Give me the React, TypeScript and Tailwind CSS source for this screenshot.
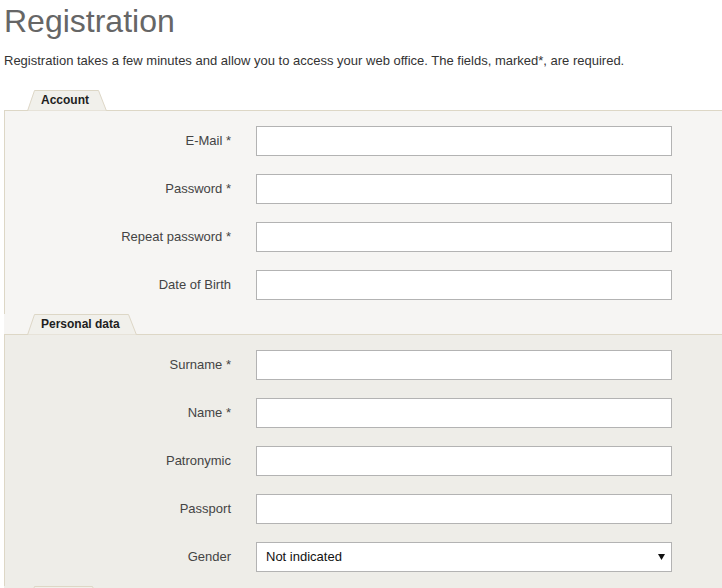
import { ReactNode } from "react";

type Field = { label: string; select?: string };

const account: Field[] = [
  { label: "E-Mail *" },
  { label: "Password *" },
  { label: "Repeat password *" },
  { label: "Date of Birth" },
];

const personal: Field[] = [
  { label: "Surname *" },
  { label: "Name *" },
  { label: "Patronymic" },
  { label: "Passport" },
  { label: "Gender", select: "Not indicated" },
];

function Tab({ title, width }: { title: string; width: number }) {
  // trapezoid tab that sits on top of the section border
  return (
    <div className="relative z-10 ml-[23px] h-[21px]" style={{ width }}>
      <svg className="absolute inset-0" width={width} height={21}>
        <polygon
          points={`0.5,21 7.5,0.5 ${width - 8.5},0.5 ${width - 0.5},21`}
          className="fill-[#f1f0eb] stroke-[#ddd7c6]"
        />
      </svg>
      <span className="relative block pl-[14px] text-[12px] font-bold leading-[20px] text-[#1e1e1e]">{title}</span>
    </div>
  );
}

function Section({ title, tabWidth, bg, children }: { title: string; tabWidth: number; bg: string; children: ReactNode }) {
  return (
    <div>
      <Tab title={title} width={tabWidth} />
      <div className={`-mt-px flex flex-col gap-[18px] border-l border-t border-[#ddd7c6] pb-[14px] pt-[15px] ${bg}`}>
        {children}
      </div>
    </div>
  );
}

function Row({ field }: { field: Field }) {
  return (
    <div className="flex items-center">
      <label className="w-[226px] text-right text-[13px] text-[#444]">{field.label}</label>
      {field.select ? (
        <div className="ml-[25px] flex h-[30px] w-[416px] items-center justify-between border border-[#b3b3b3] bg-white pl-[9px] pr-[6px] text-[13px] text-[#111]">
          <span>{field.select}</span>
          <svg width="7" height="6" viewBox="0 0 7 6">
            <path d="M0 0h7L3.5 6z" fill="#111" />
          </svg>
        </div>
      ) : (
        <input className="ml-[25px] h-[30px] w-[416px] border border-[#b3b3b3] bg-white outline-none" />
      )}
    </div>
  );
}

export default function App() {
  return (
    <div className="h-[588px] overflow-hidden bg-white pl-[4px] font-['Liberation_Sans',Arial,sans-serif]">
      <h1 className="pt-[1px] text-[32px] leading-[40px] text-[#666]">Registration</h1>
      <p className="mt-[12px] text-[13px] leading-[16px] text-[#333]">
        Registration takes a few minutes and allow you to access your web office. The fields, marked*, are required.
      </p>
      <div className="mt-[21px]">
        <Section title="Account" tabWidth={80} bg="bg-[#f6f5f3]">
          {account.map((f) => (
            <Row key={f.label} field={f} />
          ))}
        </Section>
        <div className="bg-[#f6f5f3]">
          <Section title="Personal data" tabWidth={110} bg="bg-[#eeede8]">
            {personal.map((f) => (
              <Row key={f.label} field={f} />
            ))}
          </Section>
        </div>
        <div className="bg-[#eeede8]">
          <Section title="" tabWidth={74} bg="bg-[#f6f5f3]">
            <div className="h-[30px]" />
          </Section>
        </div>
      </div>
    </div>
  );
}
